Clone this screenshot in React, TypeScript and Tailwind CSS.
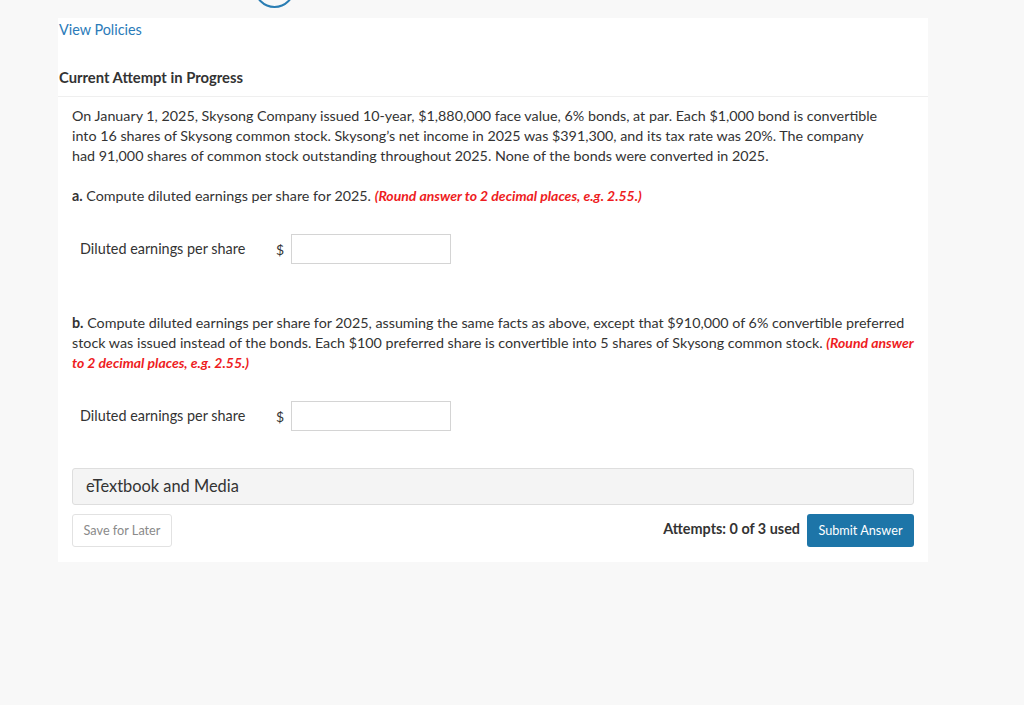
import React from 'react';

function AnswerRow() {
  return (
    <div className="flex items-center pl-2">
      <span className="w-[196px] text-[14.4px] text-[#333]">Diluted earnings per share</span>
      <span className="w-[15px] text-[14px] text-[#333]">$</span>
      <input type="text" className="w-[160px] h-[30px] border border-[#d4d4d4] bg-white outline-none px-2" />
    </div>
  );
}

export default function App() {
  return (
    <div className="relative min-h-[705px] bg-[#f8f8f8] overflow-hidden" style={{ fontFamily: 'Lato, "Open Sans", sans-serif' }}>
      <div className="relative h-[18px]">
        <div className="absolute left-[254px] top-[-33px] w-[41px] h-[41px] rounded-full border-2 border-[#2a7db3]"></div>
      </div>

      <div className="ml-[58px] w-[870px] bg-white pb-[15px]">
        <div className="pt-[2px]">
          <a href="#" className="block leading-5 text-[14.4px] text-[#2b7bb9] pl-px">View Policies</a>
        </div>

        <div className="mt-[27px] pb-[9px] border-b border-[#efefef]">
          <h2 className="leading-5 text-[14.8px] font-bold text-[#333] pl-px">Current Attempt in Progress</h2>
        </div>

        <div className="px-[14px] pt-[9px]">
          <p className="text-[14.3px] leading-5 text-[#333] pr-[30px]">
            On January 1, 2025, Skysong Company issued 10-year, $1,880,000 face value, 6% bonds, at par. Each $1,000 bond is convertible into 16 shares of Skysong common stock. Skysong’s net income in 2025 was $391,300, and its tax rate was 20%. The company had 91,000 shares of common stock outstanding throughout 2025. None of the bonds were converted in 2025.
          </p>

          <p className="mt-5 text-[14.3px] leading-5 text-[#333]">
            <b>a.</b> Compute diluted earnings per share for 2025.{' '}
            <i className="font-bold text-[14px] text-[#ee1c22]">(Round answer to 2 decimal places, e.g. 2.55.)</i>
          </p>

          <div className="mt-[28px]">
            <AnswerRow />
          </div>

          <p className="mt-[49px] text-[14.3px] leading-5 text-[#333]">
            <b>b.</b> Compute diluted earnings per share for 2025, assuming the same facts as above, except that $910,000 of 6% convertible preferred stock was issued instead of the bonds. Each $100 preferred share is convertible into 5 shares of Skysong common stock.{' '}
            <i className="font-bold text-[14px] text-[#ee1c22]">(Round answer to 2 decimal places, e.g. 2.55.)</i>
          </p>

          <div className="mt-[28px]">
            <AnswerRow />
          </div>

          <div className="mt-[37px] h-[37px] flex items-center px-[13px] bg-[#f4f4f4] border border-[#dedede] rounded-[3px]">
            <span className="text-[16.4px] text-[#333]">eTextbook and Media</span>
          </div>

          <div className="mt-[9px] flex items-center justify-between">
            <button className="h-[33px] w-[100px] border border-[#e2e2e2] rounded-[3px] bg-white text-[12.7px] text-[#8a8a8a]">
              Save for Later
            </button>
            <div className="flex items-center gap-[7px]">
              <span className="text-[14.4px] font-bold text-[#333] -mt-[3px]">Attempts: 0 of 3 used</span>
              <button className="h-[33px] w-[107px] rounded-[3px] bg-[#1d75a8] text-[12.7px] text-white">
                Submit Answer
              </button>
            </div>
          </div>
        </div>
      </div>
    </div>
  );
}
